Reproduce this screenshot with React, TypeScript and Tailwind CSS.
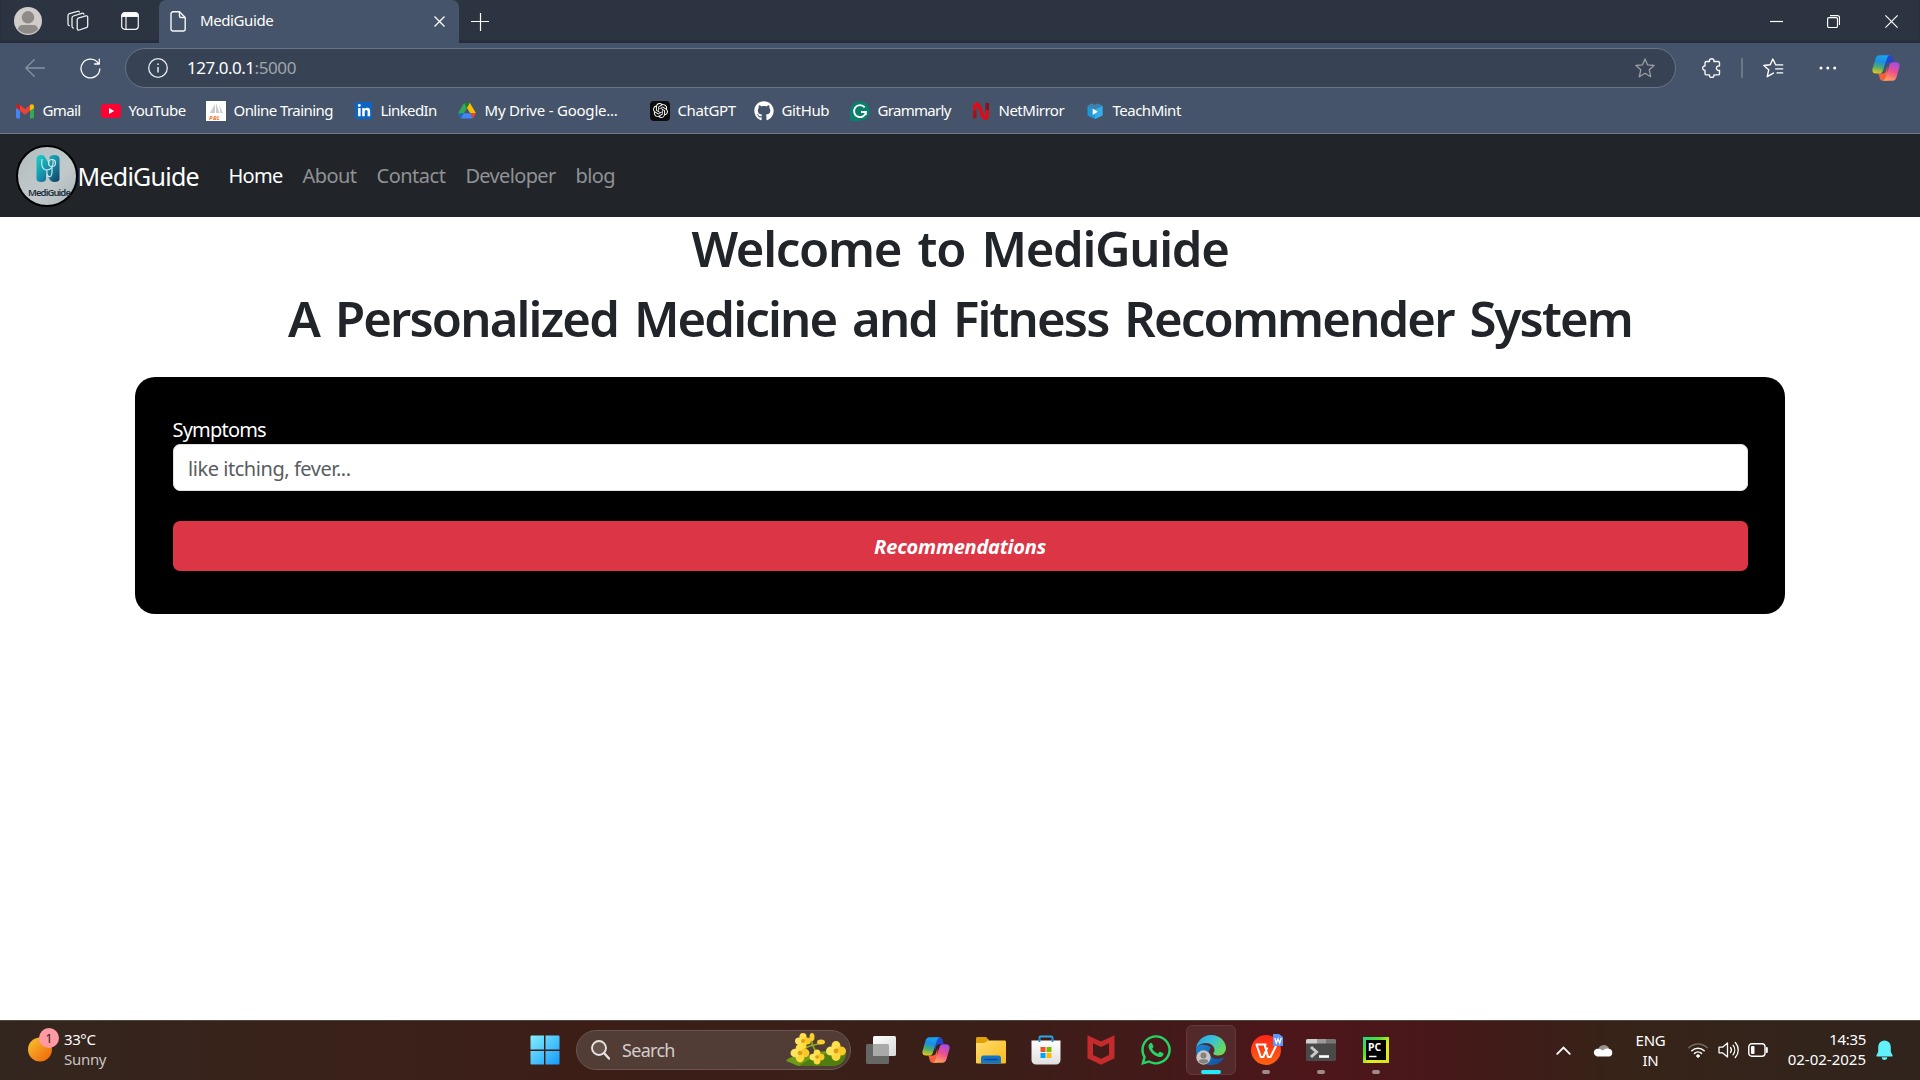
import React from 'react';
import { FaGithub, FaLinkedinIn, FaWhatsapp } from 'react-icons/fa';
import { SiOpenai } from 'react-icons/si';

function Copilot({ id }: { id: string }) {
  return (
    <svg width="28" height="26" viewBox="0 0 28 26" fill="none">
      <defs>
        <linearGradient id={id + 'a'} x1="9" y1="0" x2="5" y2="19" gradientUnits="userSpaceOnUse">
          <stop stopColor="#18a5f5" />
          <stop offset=".35" stopColor="#1b8fe0" />
          <stop offset=".65" stopColor="#4fae6b" />
          <stop offset="1" stopColor="#f6c912" />
        </linearGradient>
        <linearGradient id={id + 'b'} x1="23" y1="7" x2="16" y2="26" gradientUnits="userSpaceOnUse">
          <stop stopColor="#a04bea" />
          <stop offset=".5" stopColor="#f0508a" />
          <stop offset="1" stopColor="#ffa45c" />
        </linearGradient>
        <linearGradient id={id + 'c'} x1="14" y1="0" x2="21" y2="8" gradientUnits="userSpaceOnUse">
          <stop stopColor="#1c50c9" />
          <stop offset="1" stopColor="#2a3fd0" />
        </linearGradient>
      </defs>
      <path d="M13 .3h4.600c1.800 0 2.500 1 3 2.600l1.300 4.300h-4.600c-2 0-2.700 1-3.200 2.700l-1.300 4z" fill={`url(#${id}c)`} />
      <path d="M15 25.700h-4.200c-1.900 0-2.700-1-3.100-2.600L6.400 18.500h4.400c2 0 2.700-1 3.200-2.700l1.500-4.500z" fill="#f4603c" />
      <path d="M7.500.3H18c-1.700.2-2.500 1.300-3.100 3.100l-4 12.300c-.6 1.800-1.700 2.900-3.700 2.900H4C1 18.600-.2 16.500.6 13.700L3.400 3.900C4.100 1.500 5.400.3 7.500.3z" fill={`url(#${id}a)`} />
      <path d="M20.500 25.700H10.500c1.500-.2 2.400-1.300 3-3.100l4-12.300c.6-1.900 1.700-3.100 3.700-3.100H24c3 0 4.200 2.100 3.400 4.900l-2.800 10c-.7 2.400-2 3.600-4.100 3.600z" fill={`url(#${id}b)`} />
    </svg>
  );
}

function TabBar() {
  return (
    <div className="flex h-[43px] shrink-0 bg-[#2b3440] shadow-[inset_0_-2px_2px_#252d38]">
      <div className="flex w-[159px] items-center rounded-br-[6px] pl-[14px] pb-px">
        <svg width="28" height="28" viewBox="0 0 28 28">
          <circle cx="14" cy="14" r="14" fill="#cfccca" />
          <circle cx="14" cy="10.300" r="6.200" fill="#8d8a87" />
          <path d="M4 22.500c0-3 2-4.500 4.500-4.500h11c2.500 0 4.500 1.500 4.500 4.500a14 14 0 0 1-20 0z" fill="#8d8a87" />
        </svg>
        <svg className="ml-[25px]" width="22" height="22" viewBox="0 0 22 22" fill="none" stroke="#eef0f2" strokeWidth="1.300" strokeLinejoin="round" strokeLinecap="round">
          <path d="M11.200 8.200l7.500-2.300c1.200-.3 2 .3 2 1.400v8.400c0 1-.4 1.700-1.400 2l-7 2.300c-1.300.4-2.100-.2-2.100-1.400v-8.500c0-1 .2-1.600 1-1.900z" />
          <path d="M6.300 18.100C5.500 17.900 5 17.300 5 16.300V8c0-1.100.5-1.700 1.400-2l8.500-2.700c1-.3 1.800 0 2 .8" />
          <path d="M2.300 15.600C1.400 15.400 1 14.800 1 13.900V5.700c0-1.100.5-1.700 1.400-2l8.100-2.400c.9-.3 1.700 0 1.900.7" />
        </svg>
        <svg className="ml-[32px]" width="18" height="18" viewBox="0 0 18 18" fill="none" stroke="#f3f4f5" strokeWidth="1.200">
          <rect x=".7" y=".7" width="16.600" height="16.600" rx="3" />
          <path d="M1 4.500V3.500A2.500 2.500 0 0 1 3.500 1h11A2.500 2.500 0 0 1 17 3.500v1z" fill="#fff" />
          <path d="M5 5v12" />
        </svg>
      </div>
      <div className="flex w-[300px] items-center rounded-t-[7px] bg-[#45546a] pl-[11px]">
        <svg width="16" height="21" viewBox="0 0 16 21" fill="none" stroke="#f6f7f8" strokeWidth="1.400" strokeLinejoin="round">
          <path d="M3 .8h6.500l5.700 5.700V18a2 2 0 0 1-2 2H3a2 2 0 0 1-2-2V2.800a2 2 0 0 1 2-2z" />
          <path d="M9.500 1v4a1.500 1.500 0 0 0 1.500 1.500h4" />
        </svg>
        <span className="ml-[14px] whitespace-nowrap pb-[2px] text-[15px] tracking-[-0.4px]">MediGuide</span>
        <svg className="ml-auto mr-[14px]" width="11" height="11" viewBox="0 0 11 11" stroke="#fff" strokeWidth="1.300">
          <path d="M.5.5l10 10M10.500.5l-10 10" />
        </svg>
      </div>
      <div className="flex flex-1 items-center pl-[12px]">
        <svg width="18" height="18" viewBox="0 0 18 18" stroke="#fff" strokeWidth="1.200">
          <path d="M9.500 0v18M0 8.500h18" />
        </svg>
        <svg className="ml-auto" width="13" height="13" viewBox="0 0 13 13" stroke="#fff" strokeWidth="1.200">
          <path d="M0 6.500h13" />
        </svg>
        <svg className="ml-[44px]" width="13" height="13" viewBox="0 0 13 13" stroke="#fff" strokeWidth="1.200" fill="none">
          <rect x=".6" y="2.600" width="9.900" height="9.900" rx="1.500" />
          <path d="M3 .6h7.500a2 2 0 0 1 2 2V10" />
        </svg>
        <svg className="ml-[45px] mr-[22px]" width="13" height="13" viewBox="0 0 13 13" stroke="#fff" strokeWidth="1.200">
          <path d="M.4.4l12.200 12.200M12.600.4L.4 12.600" />
        </svg>
      </div>
    </div>
  );
}

function Toolbar() {
  return (
    <div className="flex h-[50px] items-center bg-[#45546a] pl-[25px]">
      <svg width="20" height="18" viewBox="0 0 20 18" fill="none" stroke="#8692a2" strokeWidth="1.300" strokeLinecap="round" strokeLinejoin="round">
        <path d="M19.500 9H.8M9.200.7L.8 9l8.400 8.300" />
      </svg>
      <svg className="ml-[35px]" width="21" height="21" viewBox="0 0 21 21" fill="none" stroke="#fff" strokeWidth="1.300" strokeLinecap="round" strokeLinejoin="round">
        <path d="M19.800 11A9.400 9.400 0 1 1 18.300 5.400M19.300 1.200v4.800h-4.800" />
      </svg>
      <div className="ml-[24px] flex h-10 w-[1551px] items-center rounded-full border border-[#697585] bg-[#374354] pl-[22px] pr-[20px]">
        <svg width="20" height="20" viewBox="0 0 20 20" fill="none" stroke="#e8eaed" strokeWidth="1.300">
          <circle cx="10" cy="10" r="9.300" />
          <path d="M10 9v5.500" strokeWidth="1.500" />
          <circle cx="10" cy="6.200" r=".6" fill="#e8eaed" strokeWidth=".6" />
        </svg>
        <span className="ml-[19px] text-[17px] tracking-[-0.5px]">127.0.0.1</span>
        <span className="text-[17px] tracking-[-0.4px] text-[#a0a4ab]">:5000</span>
        <svg className="ml-auto" width="20" height="20" viewBox="0 0 20 20" fill="none" stroke="#9b9da1" strokeWidth="1.300" strokeLinejoin="round">
          <path d="M10 .9l2.600 6 6.500.6-4.900 4.300 1.500 6.900-5.700-3.400-5.700 3.400 1.500-6.900L.9 7.500l6.500-.6z" />
        </svg>
      </div>
      <svg className="ml-[26px]" width="19" height="20" viewBox="0 0 19 20" fill="none" stroke="#f4f5f6" strokeWidth="1.400" strokeLinejoin="round">
        <path d="M4.500 3.500h3c-.4-1.600.6-2.800 2.200-2.800s2.600 1.200 2.200 2.800H16c.9 0 1.500.6 1.500 1.500v3c-1.900-.4-3.100.7-3.100 2.200s1.200 2.600 3.100 2.200v3c0 .9-.6 1.500-1.500 1.500h-4.100c.4 1.500-.6 2.600-2.200 2.600s-2.600-1.100-2.200-2.600h-3c-.9 0-1.500-.6-1.500-1.500v-3.100c-1.400.2-2.300-.8-2.300-2.200S1.600 7.800 3 8V5c0-.9.600-1.500 1.500-1.500z" />
      </svg>
      <div className="ml-5 h-5 w-0.5 bg-[#6b7888]" />
      <svg className="ml-5" width="21" height="20" viewBox="0 0 21 20" fill="none" stroke="#fff" strokeWidth="1.400" strokeLinejoin="round" strokeLinecap="round">
        <path d="M12.400 6.200L9.800 1 7.200 6.800.8 7.500l4.900 4.300-1.500 6.900 6.200-3.600" />
        <path d="M12.700 6.900h7M12.700 10.900h7M14 14.900h5.700" strokeWidth="1.300" />
      </svg>
      <svg className="ml-[35px]" width="18" height="4" viewBox="0 0 18 4" fill="#fff">
        <circle cx="2" cy="2" r="1.500" /><circle cx="8.800" cy="2" r="1.500" /><circle cx="15.700" cy="2" r="1.500" />
      </svg>
      <div className="ml-[35px]"><Copilot id="top" /></div>
    </div>
  );
}

const GmailIcon = (
  <svg width="20" height="20" viewBox="0 0 20 20">
    <path d="M1 5v11.200c0 .7.500 1.200 1.200 1.200H5V8z" fill="#4285f4" />
    <path d="M15 8v9.400h2.800c.7 0 1.200-.5 1.200-1.200V5z" fill="#34a853" />
    <path d="M1 5.500C1 3.300 3.200 2.700 4.800 3.900L5 4v5.800L1 7z" fill="#c5221f" />
    <path d="M5 4l5 4 5-4v5.800l-5 4-5-4z" fill="#ea4335" />
    <path d="M15 4c1.800-1.400 4-.7 4 1.500V7l-4 2.800z" fill="#fbbc04" />
  </svg>
);
const YoutubeIcon = (
  <svg width="20" height="20" viewBox="0 0 20 20">
    <rect y="3" width="20" height="14" rx="3.500" fill="#ff0033" />
    <path d="M8 7l5.200 3L8 13z" fill="#fff" />
  </svg>
);
const TrainingIcon = (
  <svg width="20" height="20" viewBox="0 0 20 20">
    <rect width="20" height="20" fill="#fff" />
    <path d="M4 12L9 3v9zM10 12V2l3.500 10zM13 4l4 8h-2.500z" fill="#c9cbcd" />
    <text x="3" y="18.600" fontSize="6" fontWeight="800" fontStyle="italic" fill="#f0813c" textLength="11">PBL</text>
  </svg>
);
const DriveIcon = (
  <svg width="20" height="20" viewBox="0 0 20 20">
    <path d="M7.200 1.800L1 12.300l3 4.900L10 7z" fill="#34a853" />
    <path d="M7.200 1.800h5.600L10 7z" fill="#188038" />
    <path d="M12.800 1.800l6.200 10.500h-5.800L10 7z" fill="#fbbc04" />
    <path d="M1 12.300h5.900L4 17.200z" fill="#1967d2" />
    <path d="M6.900 12.300h6.300l2.800 5.200H4z" fill="#4285f4" />
    <path d="M13.200 12.300H19l-3 5.200z" fill="#ea4335" />
  </svg>
);
const GrammarlyIcon = (
  <svg width="20" height="20" viewBox="0 0 20 20">
    <path d="M10 0a10 10 0 1 1 0 20H0V10A10 10 0 0 1 10 0z" fill="#0b7f6b" />
    <path d="M14.700 6.300A6 6 0 1 0 16 11h-5M15.800 10.800v3.200" fill="none" stroke="#fff" strokeWidth="1.900" />
  </svg>
);
const NetIcon = (
  <svg width="20" height="20" viewBox="0 0 20 20" fill="none">
    <path d="M3.800 17.500V9.500" stroke="#a3121c" strokeWidth="3.500" />
    <path d="M16.200 2v10" stroke="#8c101a" strokeWidth="3.500" />
    <path d="M3.800 9V6.500c0-4 3.400-4.200 4.500-1l3.200 9c1.200 3.500 4.700 3.300 4.700-.5V9" stroke="#e50914" strokeWidth="3.400" />
  </svg>
);
const TeachIcon = (
  <svg width="20" height="20" viewBox="0 0 20 20">
    <path d="M2.500 5L7 2.500 10 4l3-1.500L17.500 5v9.500L10 18l-7.500-3.500z" fill="#2196d9" />
    <path d="M2.500 5L10 8.500 17.500 5 13 2.500 10 4 7 2.500z" fill="#3f7fa8" />
    <path d="M10 8.500L17.500 5v9.500L10 18z" fill="#35aee8" />
    <path d="M7.700 7.500l5 3.200-5 3.200z" fill="#fff" />
  </svg>
);

const bookmarks = [
  { label: 'Gmail', w: 'w-[86px]', t: 'tracking-[-0.6px]', icon: GmailIcon },
  { label: 'YouTube', w: 'w-[105px]', t: 'tracking-[-0.5px]', icon: YoutubeIcon },
  { label: 'Online Training', w: 'w-[147px]', t: 'tracking-[-0.56px]', icon: TrainingIcon },
  { label: 'LinkedIn', w: 'w-[104px]', t: 'tracking-[-0.6px]', icon: <div className="ml-0.5 flex h-[17px] w-[17px] items-center justify-center rounded-[1px] bg-[#0a66c2]"><FaLinkedinIn size={14} /></div> },
  { label: 'My Drive - Google...', w: 'w-[193px]', t: 'tracking-[-0.22px]', icon: DriveIcon },
  { label: 'ChatGPT', w: 'w-[104px]', t: 'tracking-[-0.4px]', icon: <div className="flex h-5 w-5 items-center justify-center rounded-[4px] bg-[#0d0d0d]"><SiOpenai size={15} /></div> },
  { label: 'GitHub', w: 'w-[96px]', t: 'tracking-[-0.35px]', icon: <FaGithub size={20} /> },
  { label: 'Grammarly', w: 'w-[121px]', t: 'tracking-[-0.7px]', icon: GrammarlyIcon },
  { label: 'NetMirror', w: 'w-[114px]', t: 'tracking-[-0.5px]', icon: NetIcon },
  { label: 'TeachMint', w: 'w-[100px]', t: 'tracking-[-0.5px]', icon: TeachIcon },
];

function Bookmarks() {
  return (
    <div className="flex h-[41px] items-center border-b border-[#6e7b8b] bg-[#45546a] pb-[5px] pl-[15px]">
      {bookmarks.map((b) => (
        <div key={b.label} className={`flex shrink-0 items-center ${b.w}`}>
          <div className="w-5 shrink-0">{b.icon}</div>
          <span className={`ml-[7.5px] whitespace-nowrap pb-[2px] text-[15px] leading-5 ${b.t}`}>{b.label}</span>
        </div>
      ))}
    </div>
  );
}

function SiteLogo() {
  return (
    <svg width="62" height="62" viewBox="0 0 62 62">
      <defs>
        <linearGradient id="lg" x1="0" y1="0" x2="1" y2="1">
          <stop stopColor="#b2bcbf" /><stop offset=".6" stopColor="#c1c9cb" /><stop offset="1" stopColor="#a9b3b6" />
        </linearGradient>
        <linearGradient id="ln" x1="0" y1="0" x2="1" y2="1">
          <stop stopColor="#19d3c5" /><stop offset=".5" stopColor="#1590ac" /><stop offset="1" stopColor="#123d63" />
        </linearGradient>
      </defs>
      <circle cx="31" cy="31" r="30" fill="url(#lg)" stroke="#000" strokeWidth="2" />
      <path d="M20.500 14c0-3 2.500-4 5-4 2 0 3 1 4 3l4 7V13c0-2 2-3 5-3s5 1.300 5 4v20c0 2-2 3-5 3-2.500 0-4-1-5-3l-3.500-6v6c0 2-2 3-4.800 3s-4.700-1-4.700-3z" fill="url(#ln)" />
      <path d="M26 14c-1 8 1 11 5 11s7-4 6-10M31 25c-1 8 5 9 5 2v-5" fill="none" stroke="#cfe5e8" strokeWidth="1.200" />
      <circle cx="36" cy="18" r="3.500" fill="none" stroke="#cfe5e8" strokeWidth="1.200" />
      <text x="12" y="51" fontSize="9.500" fontWeight="600" letterSpacing="-0.9" fill="#1f3040">MediGuide</text>
    </svg>
  );
}

function Navbar() {
  return (
    <nav className="flex h-[83px] items-center bg-[#212529] pl-[15.5px] text-[20px] text-[#909294]">
      <SiteLogo />
      <span className="w-[151px] pt-[2px] text-[25px] tracking-[-0.75px] text-white">MediGuide</span>
      <div className="flex gap-5 pt-px">
        <span className="tracking-[-0.72px] text-white">Home</span>
        <span className="tracking-[-0.56px]">About</span>
        <span className="tracking-[-0.5px]">Contact</span>
        <span className="tracking-[-0.65px]">Developer</span>
        <span className="tracking-[-0.6px]">blog</span>
      </div>
    </nav>
  );
}

function Page() {
  return (
    <main className="h-[803px] bg-white text-[#212529]">
      <div className="flex flex-col items-center pt-px text-[49px] font-semibold leading-[60px] [word-spacing:5px]">
        <h1 className="mb-[10px] tracking-[-1.3px]">Welcome to MediGuide</h1>
        <h1 className="tracking-[-1.85px]">A Personalized Medicine and Fitness Recommender System</h1>
      </div>
      <form className="mx-auto mt-[29px] flex h-[237px] w-[1650px] flex-col rounded-[20px] bg-black px-[37.5px] pt-[38px] text-[20px]">
        <label className="h-[29px] leading-[30px] tracking-[-0.8px] text-white">Symptoms</label>
        <div className="flex h-[47px] items-center rounded-[7px] border border-[#dee2e6] bg-white pl-[14.5px] pt-[2px] tracking-[-0.45px] text-[#595c5f]">like itching, fever...</div>
        <button type="button" className="mt-[30px] h-[50px] rounded-[7px] bg-[#dc3545] pt-[2px] font-bold italic tracking-[-0.25px] text-white">Recommendations</button>
      </form>
    </main>
  );
}

function Cell({ children, running = false }: { children: React.ReactNode; running?: boolean }) {
  return (
    <div className="relative flex h-full w-[55px] shrink-0 items-center justify-center">
      {children}
      {running && <div className="absolute bottom-[5px] h-1 w-2 rounded-full bg-[#a08a8c]" />}
    </div>
  );
}

function Blossom({ x, y, s }: { x: number; y: number; s: number }) {
  return (
    <g transform={`translate(${x} ${y}) scale(${s})`}>
      <ellipse cx="0" cy="-5" rx="4.500" ry="5" fill="#ffe04a" />
      <ellipse cx="5" cy="0" rx="5" ry="4.500" fill="#f9c928" />
      <ellipse cx="0" cy="5" rx="4.500" ry="5" fill="#ffd83a" />
      <ellipse cx="-5" cy="0" rx="5" ry="4.500" fill="#fbe45e" />
      <circle r="2.400" fill="#e09a14" />
    </g>
  );
}

function Taskbar() {
  return (
    <footer className="flex h-[60px] items-center border-t border-[#504640] bg-[linear-gradient(90deg,#33261e_0%,#38231b_12%,#3c1e17_30%,#3a1f19_50%,#431a19_60%,#4d161a_68%,#4a171a_73%,#3f1c18_79%,#372318_84%,#30241d_100%)] pb-px">
      <div className="flex w-[517px] items-center pl-[28px]">
        <svg className="mb-[10px]" width="32" height="36" viewBox="0 0 32 36">
          <defs><linearGradient id="sun" x1="0" y1="0" x2="1" y2="1"><stop stopColor="#f7c531" /><stop offset="1" stopColor="#ee5f06" /></linearGradient></defs>
          <circle cx="12" cy="22.500" r="12" fill="url(#sun)" />
          <circle cx="21" cy="11" r="10" fill="#ff99a4" />
          <text x="17.200" y="15.700" fontSize="13" fill="#3b1a1d">1</text>
        </svg>
        <div className="ml-[4px] pb-[3px] text-[15px] leading-[20px]">
          <div className="tracking-[-0.4px]">33°C</div>
          <div className="tracking-[-0.3px] text-[#c9c4c1]">Sunny</div>
        </div>
      </div>
      <Cell>
        <svg width="30" height="30" viewBox="0 0 30 30">
          <defs><linearGradient id="win" x1="0" y1="0" x2="30" y2="30" gradientUnits="userSpaceOnUse"><stop stopColor="#86f0fd" /><stop offset="1" stopColor="#1399fb" /></linearGradient></defs>
          <path d="M1.500.5H14v14H.5v-13a1 1 0 0 1 1-1zM15.500.5h13a1 1 0 0 1 1 1v13h-14zM.5 16H14v13.500H1.500a1 1 0 0 1-1-1zM15.500 16h14v12.500a1 1 0 0 1-1 1h-13z" fill="url(#win)" />
        </svg>
      </Cell>
      <div className="ml-1 mr-[2.5px] flex h-10 w-[275px] shrink-0 items-center rounded-full border border-[#6a5650] bg-[#513c36] pl-[14px]">
        <svg width="19" height="20" viewBox="0 0 19 20" fill="none" stroke="#e7e3e1">
          <circle cx="8" cy="8" r="7" strokeWidth="1.900" fill="#67544f" /><path d="M13 13l5 5.500" strokeWidth="2.400" strokeLinecap="round" />
        </svg>
        <span className="ml-[12px] text-[18px] tracking-[-0.7px] text-[#d3cdca]">Search</span>
        <svg className="ml-auto mr-[3px]" width="62" height="34" viewBox="0 0 62 34">
          <path d="M1 28c4-5 10-5 17-5 8 0 14-5 24-5h19c0 10-6 15-14 15H14c-3 0-6-3-13-5z" fill="#6f9a17" />
          <path d="M14 33c10-8 26-13 47-15 0 10-6 15-14 15z" fill="#4f7d10" />
          <path d="M17 20C22 10 30 14 38 9M28 13l6 12M27 12V4" stroke="#8fae1e" strokeWidth="1.600" fill="none" />
          <Blossom x={18} y={8} s={0.8} />
          <Blossom x={15} y={20} s={0.95} />
          <Blossom x={32} y={24} s={0.75} />
          <Blossom x={51} y={18} s={1} />
          <ellipse cx="27" cy="4" rx="2.500" ry="4" fill="#f6cf30" />
          <ellipse cx="36" cy="9" rx="4" ry="2.500" fill="#f6cf30" />
        </svg>
      </div>
      <Cell>
        <svg width="30" height="28" viewBox="0 0 30 28">
          <defs><linearGradient id="tv" x1="0" y1="0" x2="1" y2="1"><stop stopColor="#fff" /><stop offset="1" stopColor="#d8d8d8" /></linearGradient></defs>
          <rect y="8" width="23" height="20" rx="1.500" fill="#666" />
          <rect x="7" width="23" height="20" rx="1.500" fill="url(#tv)" />
          <path d="M7 8h14.500A1.500 1.500 0 0 1 23 9.500V20H8.500A1.500 1.500 0 0 1 7 18.500z" fill="#a9a9a9" />
        </svg>
      </Cell>
      <Cell><Copilot id="task" /></Cell>
      <Cell>
        <svg width="30" height="28" viewBox="0 0 30 28">
          <defs><linearGradient id="fo" x1="0" y1="0" x2="1" y2="1"><stop stopColor="#ffdc70" /><stop offset="1" stopColor="#fbbb17" /></linearGradient></defs>
          <path d="M0 2.500C0 1.500.7 1 1.500 1H10l3 3v5H0z" fill="#e0a008" />
          <path d="M0 7h8c1.500 0 3-2.500 4.500-2.500h16c1 0 1.500.5 1.500 1.500v20c0 1-.5 1.500-1.500 1.500h-27C.5 27.500 0 27 0 26z" fill="url(#fo)" />
          <path d="M5 27.500V22c0-1.500 1-2.500 2.500-2.500h15c1.500 0 2.500 1 2.500 2.500v5.500z" fill="#1574c8" />
          <path d="M9 23.500h12" stroke="#0b4a8b" strokeWidth="1.500" strokeLinecap="round" />
        </svg>
      </Cell>
      <Cell>
        <svg width="30" height="30" viewBox="0 0 30 30">
          <defs><linearGradient id="st" x1="0" y1="0" x2="0" y2="1"><stop stopColor="#fff" /><stop offset="1" stopColor="#dfdfdf" /></linearGradient></defs>
          <path d="M8.500 8V2.500a1 1 0 0 1 1-1h11a1 1 0 0 1 1 1V8" fill="none" stroke="#2aa9e8" strokeWidth="1.800" />
          <path d="M.5 5.500h29V25a4.500 4.500 0 0 1-4.500 4.500H5A4.500 4.500 0 0 1 .5 25z" fill="url(#st)" />
          <path d="M8.500 3v4M21.500 3v4" stroke="#1b84cf" strokeWidth="1.800" />
          <path d="M9.500 12h5v5h-5z" fill="#f25022" /><path d="M15.500 12h5v5h-5z" fill="#7fba00" />
          <path d="M9.500 18h5v5h-5z" fill="#00a4ef" /><path d="M15.500 18h5v5h-5z" fill="#ffb900" />
        </svg>
      </Cell>
      <Cell>
        <svg width="28" height="30" viewBox="0 0 28 30">
          <path d="M.5.3L14 6.500 27.500.3v22.900L14 29.700.5 23.200zM6 8.200v11.700l8 3.900 8-3.900V8.200l-8 3.900z" fill="#c52b2c" fillRule="evenodd" />
        </svg>
      </Cell>
      <Cell><FaWhatsapp size={34} color="#25d366" /></Cell>
      <Cell>
        <div className="relative flex h-[50px] w-[50px] items-center justify-center rounded-[6px] border border-[#63393c] bg-[#54292c]">
          <svg width="30" height="30" viewBox="0 0 30 30">
            <defs>
              <linearGradient id="e1" x1="0" y1="0" x2="1" y2=".5"><stop stopColor="#2b9fe0" /><stop offset=".5" stopColor="#36bfe0" /><stop offset="1" stopColor="#68d95a" /></linearGradient>
              <linearGradient id="e2" x1="0" y1="0" x2="1" y2="1"><stop stopColor="#1a86d8" /><stop offset="1" stopColor="#114f9c" /></linearGradient>
            </defs>
            <path d="M0 15c0 9 7 15 15 15 6 0 10-2.500 12.500-6.500.4-.7-.3-1.200-1-.8-5 2.500-13.500.8-13.500-5.700 0-3 2-4.500 2-4.500C9 7.500 0 9.500 0 15z" fill="url(#e2)" />
            <path d="M0 14.500C.5 6.500 6.500 0 15 0c9.500 0 15 7 15 13 0 4.500-3.300 7.500-7.500 7.500-4 0-5.200-1.300-5.200-2 0-.8 1.200-1.200 1.200-3.500C18.500 11.500 15 8 10 8 4.500 8 .5 11 0 14.500z" fill="url(#e1)" />
            <circle cx="7.500" cy="22.500" r="7.200" fill="#c9c7c5" />
            <circle cx="7.500" cy="20.500" r="3" fill="#85817e" />
            <path d="M2.500 26.800c.5-2.300 2-2.600 5-2.600s4.500.3 5 2.600a7.200 7.200 0 0 1-10 0z" fill="#85817e" />
          </svg>
          <div className="absolute bottom-0 h-1 w-5 rounded-full bg-[#26e8f8]" />
        </div>
      </Cell>
      <Cell running>
        <svg className="ml-[1px] mb-[2px]" width="32" height="32" viewBox="0 0 32 32">
          <defs><linearGradient id="wp" x1="0" y1="0" x2="0" y2="1"><stop stopColor="#ff2418" /><stop offset="1" stopColor="#fd6412" /></linearGradient></defs>
          <circle cx="15" cy="17" r="15" fill="url(#wp)" />
          <path d="M15.500 11.500H5.500L9.800 24h2.500l4-9.500M13.500 11.500L17 24h2.500L25 13" fill="none" stroke="#fff" strokeWidth="2" strokeLinejoin="round" />
          <path d="M22 1h6l4 3v9H22z" fill="#5f95f7" />
          <path d="M23.800 5l1.500 5 1.700-4 1.700 4 1.500-5" fill="none" stroke="#fff" strokeWidth="1.300" />
        </svg>
      </Cell>
      <Cell running>
        <svg width="30" height="22" viewBox="0 0 30 22">
          <rect width="30" height="22" rx="1.500" fill="#4a4a4a" />
          <path d="M0 4.500V1.500A1.500 1.500 0 0 1 1.500 0H11v4.500z" fill="#cfcfcf" /><path d="M11 0h9v4.500h-9z" fill="#9a9a9a" /><path d="M20 0h8.500A1.500 1.500 0 0 1 30 1.500v3H20z" fill="#777" />
          <path d="M5 8l5.500 5L5 18" fill="none" stroke="#c9c9c9" strokeWidth="3" /><path d="M13 17.500h10" stroke="#fff" strokeWidth="2.600" />
        </svg>
      </Cell>
      <Cell running>
        <svg width="26" height="26" viewBox="0 0 26 26">
          <defs><linearGradient id="pc" x1="0" y1="0" x2="1" y2="1"><stop stopColor="#21d789" /><stop offset=".35" stopColor="#4fe32a" /><stop offset=".6" stopColor="#e6ee1c" /><stop offset="1" stopColor="#d8e21a" /></linearGradient></defs>
          <rect width="26" height="26" fill="url(#pc)" /><rect x="3" y="3" width="20" height="20" fill="#000" />
          <text x="5" y="13.500" fontSize="10.500" fontWeight="700" fill="#fff">PC</text>
          <path d="M6 19.500h7.500" stroke="#fff" strokeWidth="1.500" />
        </svg>
      </Cell>
      <div className="ml-[152px] flex flex-1 items-center">
        <svg width="15" height="9" viewBox="0 0 15 9" fill="none" stroke="#fff" strokeWidth="1.800" strokeLinecap="round"><path d="M1.200 7.800l6.300-6.300 6.300 6.300" /></svg>
        <svg className="ml-[22px]" width="20" height="14" viewBox="0 0 20 14">
          <path d="M5 7a6 6 0 0 1 11-2l-1 5H5z" fill="#9c938f" />
          <path d="M4 13.500a4 4 0 0 1-1-7.500c3-1 5 .2 7 1.500 1.500-2 4-2.500 6-1.700A3.900 3.900 0 0 1 16 13.500z" fill="#fff" />
        </svg>
        <div className="ml-[17px] flex w-[42px] flex-col items-center pb-px text-[15px] leading-[20px] tracking-[-0.3px]"><span>ENG</span><span>IN</span></div>
        <svg className="ml-[16px]" width="20" height="16" viewBox="0 0 20 16" fill="none" stroke="#fff" strokeWidth="1.500" strokeLinecap="round">
          <path d="M.8 5.700a13 13 0 0 1 18.400 0" stroke="#75685f" />
          <path d="M3.800 8.700a8.800 8.800 0 0 1 12.400 0M6.500 11.400a5 5 0 0 1 7 0" /><circle cx="10" cy="14" r="1.300" fill="#fff" strokeWidth="1" />
        </svg>
        <svg className="ml-[10px]" width="21" height="18" viewBox="0 0 21 18" fill="none" stroke="#fff" strokeWidth="1.300" strokeLinejoin="round" strokeLinecap="round">
          <path d="M1 6.200h3.500L9.500 2v14l-5-4.200H1z" /><path d="M12.500 6.500a4 4 0 0 1 0 5M15 4.200a7.500 7.500 0 0 1 0 9.600M17.300 1.500a11 11 0 0 1 0 15" />
        </svg>
        <svg className="ml-[9px]" width="21" height="14" viewBox="0 0 21 14" fill="none" stroke="#fff" strokeWidth="1.400">
          <rect x=".8" y=".8" width="16.200" height="12.400" rx="3" /><rect x="3" y="3" width="3.500" height="8" rx="1" fill="#fff" stroke="none" /><path d="M18.800 5v4" strokeWidth="2" strokeLinecap="round" />
        </svg>
        <div className="ml-auto flex flex-col items-end pb-[3px] text-[15px] leading-[20px]"><span className="tracking-[-0.3px]">14:35</span><span>02-02-2025</span></div>
        <svg className="ml-[10px] mr-[27px]" width="17" height="20" viewBox="0 0 17 20" fill="#60f1fa">
          <path d="M8.500.5a6.300 6.300 0 0 1 6.300 6.300v5l1.700 3.400c.3.700 0 1.300-.8 1.300H1.300c-.8 0-1.100-.6-.8-1.300l1.700-3.400v-5A6.300 6.300 0 0 1 8.500.5zM5.800 17.200h5.400a2.700 2.700 0 0 1-5.400 0z" />
        </svg>
      </div>
    </footer>
  );
}

export default function App() {
  return (
    <div className="flex h-[1080px] w-[1920px] flex-col overflow-hidden font-['Noto_Sans',sans-serif] text-white">
      <TabBar />
      <Toolbar />
      <Bookmarks />
      <Navbar />
      <Page />
      <Taskbar />
    </div>
  );
}
